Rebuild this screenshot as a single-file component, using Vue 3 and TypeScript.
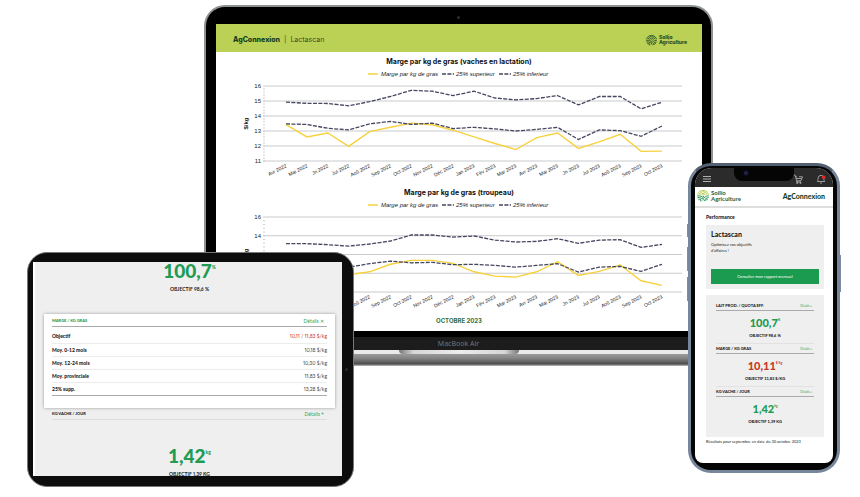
<script setup lang="ts">
interface Series {
  kind: 'main' | 'upper' | 'lower'
  values: number[]
}
interface Chart {
  title: string
  height: number
  titleY: number
  legendY: number
  top: number
  bottom: number
  min: number
  max: number
  step: number
  minor: number
  series: Series[]
}

const months = [
  'Avr 2022', 'Mai 2022', 'Jn 2022', 'Jul 2022', 'Aoû 2022', 'Sep 2022', 'Oct 2022', 'Nov 2022', 'Déc 2022',
  'Jan 2023', 'Fév 2023', 'Mar 2023', 'Avr 2023', 'Mai 2023', 'Jn 2023', 'Jul 2023', 'Aoû 2023', 'Sep 2023', 'Oct 2023',
]

const charts: Chart[] = [
  {
    title: 'Marge par kg de gras (vaches en lactation)',
    height: 131, titleY: 12, legendY: 22, top: 34, bottom: 109, min: 11, max: 16, step: 1, minor: 5,
    series: [
      { kind: 'main', values: [13.42, 12.61, 12.87, 11.97, 12.96, 13.25, 13.53, 13.42, 13.05, 12.61, 12.17, 11.77, 12.56, 12.87, 11.84, 12.28, 12.78, 11.64, 11.66] },
      { kind: 'upper', values: [14.92, 14.85, 14.83, 14.68, 14.96, 15.3, 15.71, 15.65, 15.36, 15.65, 15.2, 15.07, 15.16, 15.36, 14.74, 15.3, 15.3, 14.48, 14.92] },
      { kind: 'lower', values: [13.47, 13.44, 13.18, 13.07, 13.47, 13.64, 13.44, 13.53, 13.16, 13.25, 13.14, 13, 13.11, 13.25, 12.43, 13.07, 13.03, 12.65, 13.33] },
    ],
  },
  {
    title: 'Marge par kg de gras (troupeau)',
    height: 129, titleY: 12, legendY: 22, top: 34, bottom: 109, min: 8, max: 16, step: 2, minor: 5,
    series: [
      { kind: 'main', values: [10.6, 10.1, 10.2, 9.84, 10.16, 10.95, 11.37, 11.37, 11.05, 10.16, 9.7, 9.59, 10.16, 11.23, 9.77, 10.2, 10.88, 9.2, 8.7] },
      { kind: 'upper', values: [13.15, 13.15, 13.05, 12.9, 13.12, 13.44, 14.08, 14.08, 13.86, 13.97, 13.54, 13.33, 13.4, 13.69, 13.19, 13.54, 13.58, 12.76, 13.08] },
      { kind: 'lower', values: [11, 10.95, 10.8, 10.66, 11.02, 11.3, 11.12, 11.16, 10.91, 10.95, 10.84, 10.66, 10.84, 11.02, 10.13, 10.66, 10.73, 10.2, 10.95] },
    ],
  },
]

const plotLeft = 47
const plotRight = 466

const xAt = (i: number) => 70 + (i * 376) / (months.length - 1)
const yAt = (c: Chart, v: number) => c.top + ((c.max - v) * (c.bottom - c.top)) / (c.max - c.min)
const points = (c: Chart, s: Series) => s.values.map((v, i) => `${xAt(i).toFixed(1)},${yAt(c, v).toFixed(1)}`).join(' ')
const ticks = (c: Chart) => Array.from({ length: (c.max - c.min) / c.step + 1 }, (_, i) => c.max - i * c.step)
const minorTicks = (c: Chart) => {
  const count = ((c.max - c.min) / c.step) * c.minor
  return Array.from({ length: count }, (_, i) => c.top + ((i + 1) * (c.bottom - c.top)) / count)
}

const rows = [
  { label: 'Objectif', value: '10,11 / 11,83 $/kg', alert: true },
  { label: 'Moy. 0-12 mois', value: '10,18 $/kg', alert: false },
  { label: 'Moy. 12-24 mois', value: '10,30 $/kg', alert: false },
  { label: 'Moy. provinciale', value: '11,83 $/kg', alert: false },
  { label: '25% supp.', value: '13,28 $/kg', alert: false },
]

const metrics = [
  { name: 'LAIT PROD. / QUOTA EFF.', value: '100,7', unit: '%', goal: 'OBJECTIF 98,6 %', alert: false },
  { name: 'MARGE / KG GRAS', value: '10,11', unit: '$/kg', goal: 'OBJECTIF 11,83 $/KG', alert: true },
  { name: 'KG VACHE / JOUR', value: '1,42', unit: 'kg', goal: 'OBJECTIF 1,39 KG', alert: false },
]
</script>

<template>
  <main class="stage">
    <svg class="defs" width="0" height="0" aria-hidden="true">
      <symbol id="sollio" viewBox="0 0 24 24">
        <g fill="none" stroke-width="1.9" stroke-linecap="round">
          <g stroke="var(--sky)">
            <path d="M4.2 4.8A11 11 0 0 1 19.8 4.8" />
            <path d="M1.4 9.4A11 11 0 0 1 3 6.4M22.6 9.4A11 11 0 0 0 21 6.4" />
            <path d="M4.6 9.6A8 8 0 0 1 10 4.6M12.6 4.2A8 8 0 0 1 19.4 9.6" />
            <path d="M7.8 10.4A4.6 4.6 0 0 1 16.2 10.4" />
            <path d="M11 10.6A1.4 1.4 0 0 1 13 10.6" />
          </g>
          <g stroke="var(--field)">
            <path d="M1.2 12.6Q6 11.6 10.6 14.4M1.6 16Q6 15 9 17.6M3.4 19.4Q6 18.6 8 20.6M6.4 22.2L8 22.8" />
            <path d="M22.8 12.6Q14 12.6 11.6 21.2M22.4 16Q16.4 16 14.8 22.6M20.6 19.6Q18.6 20 17.8 21.6" />
            <path d="M13.4 13.4Q11.4 15 10.4 18" />
          </g>
        </g>
      </symbol>
    </svg>

    <section class="laptop" aria-label="MacBook Air">
      <div class="lid">
        <span class="camera"></span>
        <div class="laptop-screen">
          <header class="report-head">
            <p class="crumb"><strong>AgConnexion</strong><span class="bar">|</span><span>Lactascan</span></p>
            <div class="brand brand-dark">
              <svg class="brand-mark"><use href="#sollio" /></svg>
              <span class="brand-name">Sollio<br />Agriculture</span>
            </div>
          </header>

          <svg
            v-for="c in charts"
            :key="c.title"
            class="chart"
            :viewBox="`0 0 486 ${c.height}`"
            role="img"
            :aria-label="c.title"
          >
            <text class="chart-title" x="243" :y="c.titleY" text-anchor="middle">{{ c.title }}</text>
            <g class="legend">
              <line class="main" x1="152" x2="162" :y1="c.legendY" :y2="c.legendY" />
              <text x="165" :y="c.legendY + 2">Marge par kg de gras</text>
              <line class="upper" x1="226" x2="238" :y1="c.legendY" :y2="c.legendY" />
              <text x="240" :y="c.legendY + 2">25% superieur</text>
              <line class="lower" x1="283" x2="295" :y1="c.legendY" :y2="c.legendY" />
              <text x="297" :y="c.legendY + 2">25% inferieur</text>
            </g>
            <g class="axis">
              <line v-for="m in minorTicks(c)" :key="m" class="minor" x1="47" x2="49" :y1="m" :y2="m" />
              <g v-for="t in ticks(c)" :key="t">
                <line class="grid" :x1="plotLeft" :x2="plotRight" :y1="yAt(c, t)" :y2="yAt(c, t)" />
                <text class="tick" x="45" :y="yAt(c, t) + 2" text-anchor="end">{{ t }}</text>
              </g>
              <text class="unit" :transform="`translate(32 ${(c.top + c.bottom) / 2}) rotate(-90)`" text-anchor="middle">$/kg</text>
            </g>
            <polyline v-for="s in c.series" :key="s.kind" :class="s.kind" :points="points(c, s)" />
            <text
              v-for="(m, i) in months"
              :key="m"
              class="month"
              text-anchor="end"
              :transform="`translate(${xAt(i) + 1} ${c.bottom + 6}) rotate(-27)`"
            >{{ m }}</text>
          </svg>

          <p class="period">OCTOBRE 2023</p>
        </div>
        <p class="chin">MacBook Air</p>
      </div>
      <div class="hinge"><span class="lip"></span></div>
      <div class="base"></div>
    </section>

    <section class="tablet" aria-label="Détails par indicateur">
      <div class="tablet-screen">
        <p class="big">100,7<sup>%</sup></p>
        <p class="goal">OBJECTIF 98,6 %</p>

        <article class="sheet">
          <header class="sheet-head">
            <h2>MARGE / KG GRAS</h2>
            <a href="#marge">Détails ✕</a>
          </header>
          <table>
            <tbody>
              <tr v-for="r in rows" :key="r.label">
                <th scope="row">{{ r.label }}</th>
                <td :class="{ alert: r.alert }">{{ r.value }}</td>
              </tr>
            </tbody>
          </table>
        </article>

        <header class="next-head">
          <h2>KG VACHE / JOUR</h2>
          <a href="#vache">Détails +</a>
        </header>
        <p class="big low">1,42<sup>kg</sup></p>
        <p class="goal">OBJECTIF 1,39 KG</p>
      </div>
      <span class="sensor"></span>
    </section>

    <section class="phone" aria-label="AgConnexion mobile">
      <span class="key left silent"></span>
      <span class="key left up"></span>
      <span class="key left down"></span>
      <span class="key right power"></span>
      <div class="phone-body">
        <div class="phone-screen">
          <nav class="topbar">
            <button type="button" aria-label="Menu">
              <svg width="8" height="8" viewBox="0 0 8 8"><path class="thin" d="M0 1.5H8M0 4H8M0 6.5H8" /></svg>
            </button>
            <span class="notch"></span>
            <button type="button" class="cart" aria-label="Panier">
              <svg width="10" height="10" viewBox="0 0 20 20">
                <path d="M1 2H4L7.5 13.5H16L19 5.5H12M5 5.5H8M6 9H17M8 13.5L7 16H16" />
                <circle cx="8.5" cy="18" r="1.3" /><circle cx="15" cy="18" r="1.3" />
              </svg>
            </button>
            <button type="button" aria-label="Notifications">
              <svg width="10" height="10" viewBox="0 0 20 20">
                <path d="M2.5 15H17.5C15.5 13 15.8 11 15.8 8.5A5.8 5.8 0 0 0 4.2 8.5C4.2 11 4.5 13 2.5 15ZM8 17.5Q10 19.5 12 17.5" />
                <circle class="dot" cx="15.5" cy="6.5" r="3.5" />
              </svg>
            </button>
          </nav>
          <header class="phone-head">
            <div class="brand brand-color">
              <svg class="brand-mark"><use href="#sollio" /></svg>
              <span class="brand-name">Sollio<br />Agriculture</span>
            </div>
            <strong class="wordmark">AgConnexion</strong>
          </header>
          <div class="phone-content">
            <h1>Performance</h1>
            <article class="promo">
              <h2>Lactascan</h2>
              <p>Optimisez vos objectifs<br />d'affaires !</p>
              <button type="button">Consulter mon rapport mensuel</button>
            </article>
            <article class="metrics">
              <section v-for="m in metrics" :key="m.name">
                <header>
                  <h3>{{ m.name }}</h3>
                  <a href="#details">Détails +</a>
                </header>
                <p class="value" :class="{ alert: m.alert }">{{ m.value }}<sup>{{ m.unit }}</sup></p>
                <p class="target">{{ m.goal }}</p>
              </section>
            </article>
            <p class="note">Résultats pour septembre en date du 30 octobre 2023</p>
          </div>
        </div>
      </div>
    </section>
  </main>
</template>

<style>
body {
  margin: 0;
  background: #fff;
}
</style>

<style scoped>
.stage {
  display: grid;
  grid-template-columns:
    minmax(0, 27fr) minmax(0, 177fr) minmax(0, 150fr) minmax(0, 334fr)
    minmax(0, 25fr) minmax(0, 127fr) minmax(0, 20fr);
  align-items: start;
  font-family: Lato, "Open Sans", sans-serif;
  color: #1b1b1b;
}
.stage * {
  box-sizing: border-box;
}
.defs {
  position: absolute;
}
p, h1, h2, h3 {
  margin: 0;
}
a {
  color: #2aa55c;
  text-decoration: none;
}
button {
  border: 0;
  padding: 0;
  background: none;
  font: inherit;
  cursor: pointer;
}

/* Laptop */
.laptop {
  grid-area: 1 / 3 / 2 / 6;
  margin-top: 5px;
}
.lid {
  display: flex;
  flex-direction: column;
  border: 2px solid #8e9292;
  border-bottom: 0;
  border-radius: 21px 21px 0 0;
  background: #000;
  overflow: hidden;
}
.camera {
  align-self: center;
  width: 3px;
  height: 3px;
  margin: 9px 0 5px;
  border-radius: 50%;
  background: #2c2c2c;
}
.laptop-screen {
  margin: 0 9px 6px 10px;
  background: #fff;
}
.report-head {
  display: flex;
  align-items: center;
  justify-content: space-between;
  height: 28px;
  padding: 3px 15px 0 17px;
  background: #bad155;
}
.crumb {
  display: flex;
  gap: 4px;
  font: 7px/10px Inter, sans-serif;
  color: #2c5232;
}
.crumb strong {
  font-weight: 800;
  color: #12401f;
}
.brand {
  display: flex;
  align-items: center;
  gap: 2px;
}
.brand-mark {
  width: 11px;
  height: 12px;
}
.brand-dark {
  --sky: #24502a;
  --field: #24502a;
  color: #24502a;
}
.brand-name {
  font: 800 5px/5px Inter, sans-serif;
}
.chart {
  display: block;
  width: 100%;
  height: auto;
  font-family: "Liberation Sans", sans-serif;
}
.chart text {
  fill: #222;
}
.chart .chart-title {
  font: 700 7px Inter, sans-serif;
  fill: #111;
}
.legend text {
  font: italic 6px "Liberation Sans", sans-serif;
}
.chart line,
.chart polyline {
  fill: none;
  stroke-width: 1;
}
.chart .main {
  stroke: #f7d23e;
  stroke-width: 1.4;
}
.chart .upper,
.chart .lower {
  stroke: #45465f;
  stroke-width: 1.3;
  stroke-dasharray: 4 1.4;
}
.chart .grid {
  stroke: #c9cacc;
}
.chart .minor {
  stroke: #cfd0d2;
}
.chart .tick {
  font-size: 6px;
}
.chart .unit {
  font-size: 6px;
  font-weight: 700;
}
.chart .month {
  font-size: 5px;
}
.period {
  height: 19px;
  padding-top: 5px;
  text-align: center;
  font: 700 6px/8px Inter, sans-serif;
  color: #2b7048;
}
.chin {
  height: 13px;
  background: #1c1c1d;
  text-align: center;
  font: 7px/14px "Noto Sans", sans-serif;
  color: #737373;
}
.hinge {
  display: flex;
  justify-content: center;
  height: 4px;
  background: #e9eaec;
}
.lip {
  width: 120px;
  border-radius: 0 0 4px 4px;
  background: linear-gradient(90deg, #777, #d6d6d6 12%, #ececec 50%, #d6d6d6 88%, #777);
}
.base {
  height: 12px;
  border-radius: 0 0 12px 12px;
  background: linear-gradient(#9a9a9a, #858585 35%, #626262 65%, #4c4c4c 82%, #bdbdbd);
}

/* Tablet */
.tablet {
  display: flex;
  align-items: center;
  grid-area: 1 / 2 / 2 / 4;
  z-index: 1;
  margin-top: 252px;
  padding: 9px 3px 10px 5px;
  border: 1px solid #777;
  border-radius: 20px;
  background: #0d0d0d;
}
.tablet-screen {
  flex: 1;
  height: 214px;
  min-width: 0;
  padding: 0 7px 0 9px;
  border-left: 2px solid #fff;
  background: #efefef;
}
.sensor {
  width: 3px;
  height: 3px;
  margin: 0 2px 0 3px;
  border-radius: 50%;
  background: #26272b;
}
.big {
  display: flex;
  justify-content: center;
  font: 900 19px/18px Lato, sans-serif;
  color: #219a52;
}
.big sup {
  font-size: 5px;
  line-height: 10px;
}
.goal {
  margin-top: 5px;
  text-align: center;
  font: 700 5px/8px Lato, sans-serif;
  font-variant-numeric: proportional-nums;
}
.sheet {
  margin-top: 21px;
  padding: 3px 8px 12px;
  background: #fff;
  box-shadow: 0 0 3px #999;
}
.sheet-head,
.next-head {
  display: flex;
  justify-content: space-between;
  height: 10px;
  border-bottom: 1px solid #aaa;
  font-size: 5px;
  line-height: 8px;
}
.sheet-head a,
.next-head a {
  padding-right: 3px;
}
.next-head {
  margin: 2px 8px 0;
  border-color: #ddd;
}
.sheet-head h2,
.next-head h2 {
  font-size: 4px;
  font-weight: 900;
  line-height: 8px;
}
.sheet-head h2 {
  color: #219a52;
}
table {
  width: 100%;
  border-collapse: collapse;
  border-bottom: 1px solid #aaa;
  margin-top: 3px;
}
th,
td {
  height: 13px;
  padding: 0;
  border-bottom: 1px solid #ececec;
  font-size: 5px;
  line-height: 8px;
}
tr:last-child th,
tr:last-child td {
  border-bottom: 0;
}
th {
  text-align: left;
  font-weight: 900;
}
td {
  text-align: right;
  font-variant-numeric: proportional-nums;
  color: #444;
}
.alert,
td.alert {
  color: #c8391f;
}
.low {
  margin-top: 27px;
}

/* Phone */
.phone {
  position: relative;
  grid-area: 1 / 5 / 2 / 7;
  z-index: 2;
  margin-top: 163px;
}
.phone-body {
  position: relative;
  padding: 2px 4px 7px;
  border: 3px solid #77869a;
  border-top-color: #536072;
  border-radius: 23px;
  background: #050505;
}
.phone-screen {
  height: 295px;
  border-radius: 17px 17px 8px 8px;
  background: #fff;
  overflow: hidden;
}
.key {
  position: absolute;
  width: 2px;
  background: #7d8ca0;
}
.left {
  left: -1px;
}
.right {
  right: -1px;
}
.silent {
  top: 61px;
  height: 13px;
}
.up {
  top: 84px;
  height: 24px;
}
.down {
  top: 114px;
  height: 24px;
}
.power {
  top: 92px;
  height: 37px;
}
.topbar {
  position: relative;
  display: flex;
  align-items: center;
  height: 19px;
  padding: 2px 7px 0 8px;
  background: #2b2b2c;
}
.topbar button {
  display: flex;
}
.topbar svg {
  fill: none;
  stroke: #d2d2d2;
  stroke-width: 1.3;
}
.topbar .thin {
  stroke-width: 0.8;
}
.topbar .dot {
  fill: #ef2525;
  stroke: none;
}
.topbar .cart {
  margin: 0 13px 0 auto;
}
.notch {
  position: absolute;
  top: 0;
  left: 50%;
  width: 60px;
  height: 13px;
  margin-left: -30px;
  border-radius: 0 0 8px 8px;
  background: radial-gradient(circle at 12px 5px, #23255c 1px, #050505 3px);
}
.phone-head {
  display: flex;
  align-items: center;
  justify-content: space-between;
  height: 21px;
  padding: 0 8px 2px 2px;
  border-bottom: 2px solid #dedede;
}
.brand-color {
  --sky: #b3c93a;
  --field: #259350;
  color: #1e5c38;
}
.brand-color .brand-mark {
  width: 12px;
  height: 15px;
}
.brand-color .brand-name {
  font: 700 6px/6px Lato, sans-serif;
}
.wordmark {
  font: 900 7px/8px Lato, sans-serif;
  color: #174126;
}
.phone-content {
  padding: 5px 9px 0 11px;
}
h1 {
  font-size: 5px;
  font-weight: 900;
  line-height: 8px;
}
.promo {
  margin-top: 4px;
  padding: 5px 5px 5px;
  background: #efefef;
}
.promo h2 {
  font-size: 7px;
  font-weight: 900;
  line-height: 9px;
}
.promo p {
  margin-top: 3px;
  font-size: 4px;
  line-height: 6px;
}
.promo button {
  display: block;
  width: 100%;
  height: 15px;
  margin-top: 15px;
  background: #1b9b50;
  color: #fff;
  font-size: 4px;
}
.metrics {
  margin-top: 6px;
  padding: 5px 10px 8px;
  background: #efefef;
}
.metrics section {
  height: 43px;
  padding-top: 2px;
  border-top: 1px solid #e2e2e2;
}
.metrics section:first-child {
  border-top-color: transparent;
}
.metrics header {
  display: flex;
  justify-content: space-between;
  height: 8px;
  padding-right: 2px;
  border-bottom: 1px solid #aaa;
  font-size: 3px;
  line-height: 6px;
}
h3 {
  font-size: 4px;
  font-weight: 900;
  line-height: 6px;
}
.value {
  display: flex;
  justify-content: center;
  margin-top: 6px;
  font: 900 11px/12px Lato, sans-serif;
  color: #219a52;
}
.value.alert {
  color: #c8391f;
}
.value sup {
  font-size: 3px;
  line-height: 7px;
}
.target {
  margin-top: 4px;
  text-align: center;
  font-size: 4px;
  font-weight: 900;
  line-height: 6px;
}
.note {
  margin-top: 2px;
  font-size: 4px;
  line-height: 6px;
}
</style>
